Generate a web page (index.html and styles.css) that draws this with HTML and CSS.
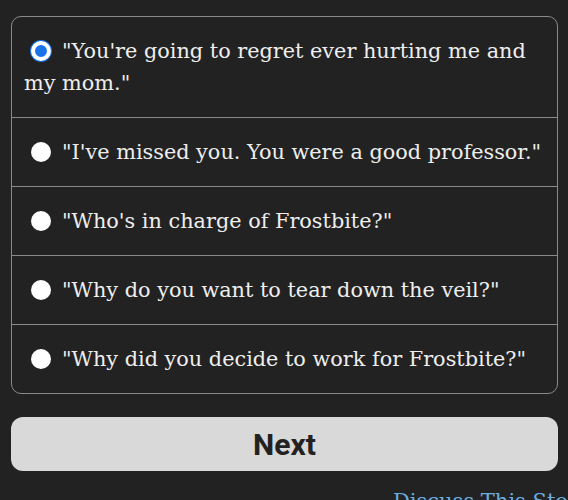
FILE: index.html
```html
<!DOCTYPE html>
<html lang="en">

<head>
  <meta charset="UTF-8">
  <meta name="viewport" content="width=device-width, initial-scale=1.0">
  <title>Choice</title>
  <link rel="stylesheet" href="styles.css">
</head>

<body>
  <form class="choices">
    <label class="choice">
      <span class="radio checked"></span>"You're going to regret ever hurting me and my mom."
    </label>
    <label class="choice">
      <span class="radio"></span>"I've missed you. You were a good professor."
    </label>
    <label class="choice">
      <span class="radio"></span>"Who's in charge of Frostbite?"
    </label>
    <label class="choice">
      <span class="radio"></span>"Why do you want to tear down the veil?"
    </label>
    <label class="choice">
      <span class="radio"></span>"Why did you decide to work for Frostbite?"
    </label>
  </form>

  <button class="next">Next</button>

  <div class="links">
    <a href="#">Discuss This Story</a>
  </div>
</body>

</html>
```

FILE: styles.css
```css
body {
  margin: 0;
  padding: 16px 10px 0 11px;
  background-color: #222222;
  color: #eeeeee;
  font-family: "DejaVu Serif", serif;
}

.choices {
  display: flex;
  flex-direction: column;
  border: 1px solid #8a8a8a;
  border-radius: 10px;
  overflow: hidden;
}

.choice {
  display: block;
  height: 32px;
  min-height: 32px;
  padding: 18px 12px;
  font-size: 20.8px;
  line-height: 32px;
  border-top: 1px solid #8a8a8a;
}

.choice:first-child {
  height: auto;
  border-top: none;
}

.radio {
  display: inline-block;
  width: 20px;
  height: 20px;
  margin: 0 11px 0 7px;
  border-radius: 50%;
  background-color: #ffffff;
  vertical-align: -3px;
  box-sizing: border-box;
}

.radio.checked {
  border: 4px solid #ffffff;
  background-color: #1a73e8;
  box-shadow: 0 0 0 1px #1a73e8;
}

.next {
  display: block;
  width: 100%;
  height: 54px;
  margin-top: 23px;
  border: none;
  border-radius: 12px;
  background-color: #d9d9d9;
  color: #222222;
  font-family: Roboto, sans-serif;
  font-weight: bold;
  font-size: 30px;
}

.links {
  margin-top: 18px;
  padding-left: 382px;
  white-space: nowrap;
  font-size: 21px;
}

.links a {
  color: #6aaee0;
  text-decoration: none;
}
```
